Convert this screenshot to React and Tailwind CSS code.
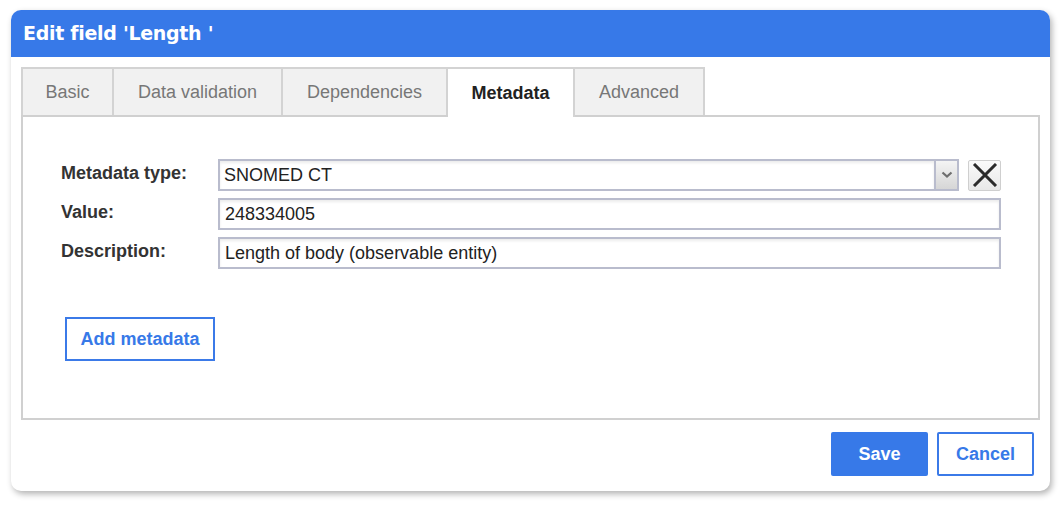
import React from "react";

const tabs = [
  { label: "Basic", w: "w-[93px]" },
  { label: "Data validation", w: "w-[169px]" },
  { label: "Dependencies", w: "w-[165px]" },
  { label: "Metadata", w: "w-[127px]", active: true },
  { label: "Advanced", w: "w-[130px]" },
];

function Field({ value }) {
  return (
    <div className="h-[32px] flex-1 border-2 border-[#b9bccd] bg-white shadow-[inset_0_2px_3px_rgba(0,0,0,0.08)] flex items-center px-[5px] text-[18px] text-[#222]">
      {value}
    </div>
  );
}

export default function App() {
  return (
    <div className="bg-white w-[1061px] h-[515px] pt-[10px] pl-[11px] font-['Liberation_Sans',Arial,sans-serif]">
      <div className="w-[1039px] h-[481px] rounded-[10px] bg-white shadow-[2px_3px_6px_rgba(0,0,0,0.3)] flex flex-col overflow-hidden">
        {/* Header */}
        <div className="h-[47px] bg-[#3779e8] flex items-center px-[12px] shrink-0">
          <h1 className="text-white text-[19px] font-bold font-['DejaVu_Sans',Verdana,sans-serif] tracking-[-0.3px]">
            Edit field 'Length '
          </h1>
        </div>

        {/* Tabs */}
        <div className="px-[10px] pt-[10px]">
          <div className="flex h-[48px] relative z-10">
            {tabs.map((t, i) => (
              <div
                key={t.label}
                className={
                  t.active
                    ? `${t.w} border-2 border-b-0 border-[#d3d3d3] ${i ? "border-l-0" : ""} bg-white flex items-center justify-center text-[18px] font-bold text-[#222] h-[50px]`
                    : `${t.w} border-2 border-b-0 border-[#d3d3d3] ${i ? "border-l-0" : ""} bg-[#f1f1f1] flex items-center justify-center text-[18px] text-[#777]`
                }
              >
                {t.label}
              </div>
            ))}
          </div>

          {/* Tab content */}
          <div className="h-[305px] border-2 border-[#d0d0d0] pt-[42px] pl-[38px] pr-[37px]">
            <div className="flex flex-col gap-[7px]">
              <div className="flex items-center">
                <label className="w-[157px] text-[18px] font-bold text-[#333] -mt-[4px]">Metadata type:</label>
                <div className="flex-1 h-[32px] flex border-2 border-[#b9bccd] bg-white">
                  <div className="flex-1 flex items-center px-[4px] text-[18px] text-[#222] shadow-[inset_0_2px_3px_rgba(0,0,0,0.08)]">
                    SNOMED CT
                  </div>
                  <div className="w-[23px] border-l-2 border-[#b9bccd] bg-gradient-to-b from-[#f4f4f4] to-[#d6d6d6] flex items-center justify-center">
                    <svg width="12" height="8" viewBox="0 0 12 8">
                      <path d="M1.5 1.5 L6 5.5 L10.5 1.5" fill="none" stroke="#6e6e6e" strokeWidth="2.2" />
                    </svg>
                  </div>
                </div>
                <button className="ml-[9px] w-[33px] h-[31px] border border-[#cfcfcf] rounded-[2px] bg-gradient-to-b from-[#fafafa] to-[#e8e8e8] flex items-center justify-center">
                  <svg width="26" height="24" viewBox="0 0 26 24">
                    <path d="M2 1 L24 23 M24 1 L2 23" stroke="#2b2b2b" strokeWidth="3" />
                  </svg>
                </button>
              </div>
              <div className="flex items-center">
                <label className="w-[157px] text-[18px] font-bold text-[#333] -mt-[4px]">Value:</label>
                <Field value="248334005" />
              </div>
              <div className="flex items-center">
                <label className="w-[157px] text-[18px] font-bold text-[#333] -mt-[4px]">Description:</label>
                <Field value="Length of body (observable entity)" />
              </div>
            </div>

            <button className="mt-[48px] ml-[4px] w-[150px] h-[44px] border-2 border-[#3b7ae8] bg-white text-[#3779e8] text-[18px] font-bold">
              Add metadata
            </button>
          </div>
        </div>

        {/* Footer */}
        <div className="flex justify-end gap-[9px] pt-[12px] pr-[16px]">
          <button className="w-[97px] h-[44px] bg-[#3779e8] rounded-[2px] text-white text-[18px] font-bold">
            Save
          </button>
          <button className="w-[97px] h-[44px] border-2 border-[#3b7ae8] rounded-[2px] bg-white text-[#3779e8] text-[18px] font-bold">
            Cancel
          </button>
        </div>
      </div>
    </div>
  );
}
